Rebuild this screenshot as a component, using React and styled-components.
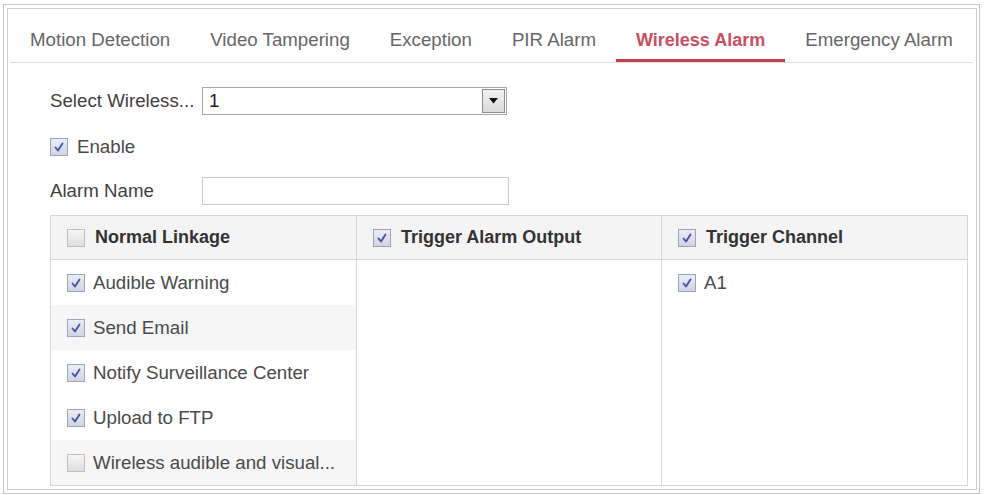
import React from "react";
import styled, { createGlobalStyle } from "styled-components";

const GlobalStyle = createGlobalStyle`
  body {
    margin: 0;
    background: #fff;
    font-family: "Liberation Sans", Arial, sans-serif;
  }
`;

const tabs = [
  "Motion Detection",
  "Video Tampering",
  "Exception",
  "PIR Alarm",
  "Wireless Alarm",
  "Emergency Alarm",
];

const linkage = [
  { label: "Audible Warning", checked: true },
  { label: "Send Email", checked: true, shade: true },
  { label: "Notify Surveillance Center", checked: true },
  { label: "Upload to FTP", checked: true },
  { label: "Wireless audible and visual...", checked: false, shade: true },
];

const Frame = styled.div`
  margin: 4px 0 0 3px;
  width: 977px;
  height: 490px;
  box-sizing: border-box;
  border: 1px solid #c4c4c4;
  padding: 3px;
  display: flex;
`;

const Panel = styled.div`
  flex: 1;
  border: 1px solid #cdcdcd;
  display: flex;
  flex-direction: column;
  background: #fff;
`;

const TabBar = styled.div`
  display: flex;
  margin: 0 3px 0 2px;
  border-bottom: 1px solid #dedede;
`;

const Tab = styled.div`
  padding: 21px 20px 9px;
  line-height: 20px;
  font-size: ${(p) => (p.$active ? "18px" : "18.7px")};
  white-space: nowrap;
  color: ${(p) => (p.$active ? "#c9505f" : "#666")};
  font-weight: ${(p) => (p.$active ? "bold" : "normal")};
  border-bottom: 3px solid ${(p) => (p.$active ? "#c43d4f" : "transparent")};
`;

const Form = styled.div`
  padding: 24px 8px 0 42px;
`;

const Fields = styled.div`
  display: flex;
  flex-direction: column;
  gap: 18px;
`;

const FormRow = styled.div`
  display: flex;
  align-items: center;
  height: 28px;
  gap: ${(p) => p.$gap || 0}px;
  margin-bottom: ${(p) => p.$shift || 0}px;
`;

const Label = styled.div`
  width: 152px;
  font-size: 18.7px;
  color: #3f3f3f;
  white-space: nowrap;
`;

const SelectBox = styled.div`
  width: 305px;
  height: 28px;
  box-sizing: border-box;
  border: 1px solid #a8a8a8;
  display: flex;
  align-items: center;
  justify-content: space-between;
  padding: 0 1px 0 6px;
  font-size: 18.7px;
  color: #222;
`;

const SelectButton = styled.div`
  width: 23px;
  height: 24px;
  box-sizing: border-box;
  border: 1px solid #8c8c8c;
  background: linear-gradient(#f2f2f2, #d9d9d9);
  display: flex;
  align-items: center;
  justify-content: center;
`;

const TextInput = styled.div`
  width: 307px;
  height: 28px;
  box-sizing: border-box;
  border: 1px solid #c9c9c9;
  background: #fff;
`;

const Text = styled.span`
  font-size: ${(p) => (p.$bold ? "18px" : "18.7px")};
  color: ${(p) => (p.$bold ? "#333" : "#4a4a4a")};
  font-weight: ${(p) => (p.$bold ? "bold" : "normal")};
  white-space: nowrap;
`;

const Box = styled.span`
  width: 18px;
  height: 18px;
  flex: none;
  box-sizing: border-box;
  border: 1px solid ${(p) => (p.$checked ? "#a0a3b6" : "#bdbdbd")};
  background: ${(p) =>
    p.$checked
      ? "linear-gradient(#eceef6, #d0d3e2)"
      : "linear-gradient(#f6f6f6, #dedede)"};
  display: flex;
  align-items: center;
  justify-content: center;
`;

const Table = styled.div`
  margin-top: 10px;
  display: grid;
  grid-template-columns: 306px 305px 1fr;
  grid-template-rows: 44px auto;
  border: 1px solid #d6d6d6;
`;

const HeadCell = styled.div`
  display: flex;
  align-items: center;
  gap: 10px;
  padding-left: 16px;
  background: #f4f4f4;
  border-bottom: 1px solid #d6d6d6;
  border-right: ${(p) => (p.$last ? "none" : "1px solid #d6d6d6")};
`;

const BodyCol = styled.div`
  display: flex;
  flex-direction: column;
  border-right: ${(p) => (p.$last ? "none" : "1px solid #d6d6d6")};
`;

const ItemRow = styled.div`
  height: 45px;
  display: flex;
  align-items: center;
  gap: 8px;
  padding-left: 16px;
  background: ${(p) => (p.$shade ? "#f6f6f6" : "#fff")};
`;

const Check = ({ checked }) => (
  <Box $checked={checked}>
    {checked && (
      <svg width="14" height="14" viewBox="0 0 14 14">
        <path
          d="M3.5 7.5 L6 10.5 L10.5 3.5"
          fill="none"
          stroke="#4553a8"
          strokeWidth="1.9"
          strokeLinecap="round"
          strokeLinejoin="round"
        />
      </svg>
    )}
  </Box>
);

export default function App() {
  return (
    <>
      <GlobalStyle />
      <Frame>
        <Panel>
          <TabBar>
            {tabs.map((t) => (
              <Tab key={t} $active={t === "Wireless Alarm"}>
                {t}
              </Tab>
            ))}
          </TabBar>
          <Form>
            <Fields>
              <FormRow>
                <Label>Select Wireless...</Label>
                <SelectBox>
                  <span>1</span>
                  <SelectButton>
                    <svg width="9" height="6" viewBox="0 0 9 6">
                      <path d="M0 0 H9 L4.5 5.5 Z" fill="#111" />
                    </svg>
                  </SelectButton>
                </SelectBox>
              </FormRow>
              <FormRow $gap={9} $shift={-2}>
                <Check checked />
                <Text>Enable</Text>
              </FormRow>
              <FormRow>
                <Label>Alarm Name</Label>
                <TextInput />
              </FormRow>
            </Fields>
            <Table>
              <HeadCell>
                <Check checked={false} />
                <Text $bold>Normal Linkage</Text>
              </HeadCell>
              <HeadCell>
                <Check checked />
                <Text $bold>Trigger Alarm Output</Text>
              </HeadCell>
              <HeadCell $last>
                <Check checked />
                <Text $bold>Trigger Channel</Text>
              </HeadCell>
              <BodyCol>
                {linkage.map((item) => (
                  <ItemRow key={item.label} $shade={item.shade}>
                    <Check checked={item.checked} />
                    <Text>{item.label}</Text>
                  </ItemRow>
                ))}
              </BodyCol>
              <BodyCol />
              <BodyCol $last>
                <ItemRow>
                  <Check checked />
                  <Text>A1</Text>
                </ItemRow>
              </BodyCol>
            </Table>
          </Form>
        </Panel>
      </Frame>
    </>
  );
}
